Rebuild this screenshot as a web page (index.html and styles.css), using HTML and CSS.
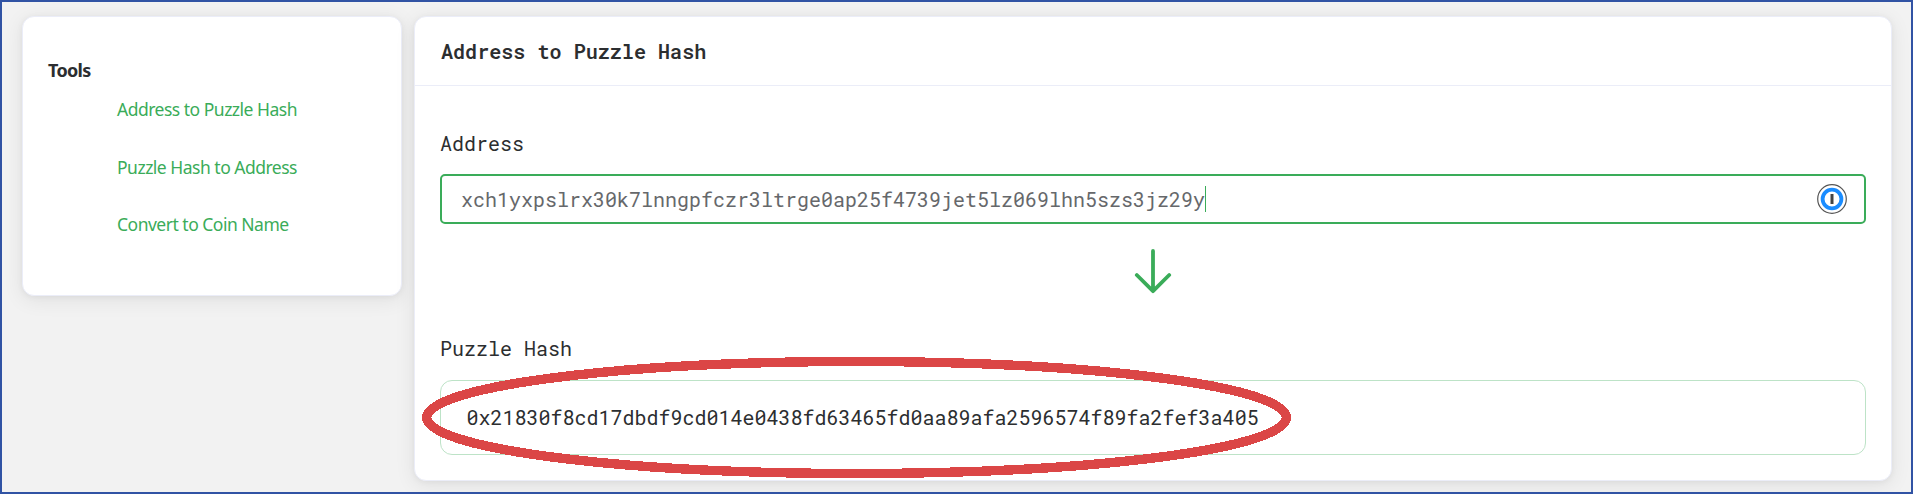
FILE: index.html
```
<!DOCTYPE html>
<html lang="en">
<head>
<meta charset="utf-8">
<title>Address to Puzzle Hash</title>
<link rel="stylesheet" href="styles.css">
</head>
<body>
<div class="page">
  <nav class="card sidebar">
    <h2 class="sidebar-title">Tools</h2>
    <a class="link link-a">Address to Puzzle Hash</a>
    <a class="link link-b">Puzzle Hash to Address</a>
    <a class="link link-c">Convert to Coin Name</a>
  </nav>
  <main class="card main">
    <header class="card-header">Address to Puzzle Hash</header>
    <section class="card-body">
      <div class="label">Address</div>
      <div class="input"><span class="value">xch1yxpslrx30k7lnngpfczr3ltrge0ap25f4739jet5lz069lhn5szs3jz29y</span><span class="caret"></span>
        <svg class="key" width="30" height="30" viewBox="0 0 30 30">
          <circle cx="15" cy="15" r="14.3" fill="#fff" stroke="#555" stroke-width="1.2"/>
          <circle cx="15" cy="15" r="9.4" fill="#fff" stroke="#1a8cff" stroke-width="3.8"/>
          <rect x="13.5" y="10" width="3" height="10" fill="#444"/>
        </svg>
      </div>
      <svg class="arrow" width="38" height="46" viewBox="0 0 38 46" fill="none" stroke="#3aac59" stroke-width="3.8" stroke-linecap="round" stroke-linejoin="round">
        <path d="M19 3V43M2.8 27L19 43.2L35.2 27"/>
      </svg>
      <div class="label">Puzzle Hash</div>
      <div class="result">0x21830f8cd17dbdf9cd014e0438fd63465fd0aa89afa2596574f89fa2fef3a405</div>
    </section>
  </main>
  <svg class="highlight" width="874" height="124" viewBox="0 0 874 124" shape-rendering="crispEdges">
    <ellipse cx="436.5" cy="62.5" rx="429.8" ry="56" fill="none" stroke="#db4646" stroke-width="9.4"/>
  </svg>
</div>
</body>
</html>
```
FILE: styles.css
```
* { box-sizing: border-box; }
body { margin: 0; }
.page {
  position: relative;
  display: flex;
  align-items: flex-start;
  gap: 12px;
  width: 1913px;
  height: 494px;
  padding: 14px 19px 11px 20px;
  border: 2px solid #3153a4;
  background: #f2f2f2;
  overflow: hidden;
  color: #2c2e30;
  font-family: "Roboto Mono", "DejaVu Sans Mono", monospace;
  font-size: 20px;
}
.card {
  background: #fff;
  border: 1px solid #ebedf8;
  border-radius: 12px;
  box-shadow: 0 4px 20px 1px rgba(0, 0, 0, .07), 0 1px 6px rgba(0, 0, 0, .05);
}
.sidebar {
  display: flex;
  flex-direction: column;
  width: 380px;
  height: 280px;
  padding: 39px 25px;
  font-family: "Segoe UI", "Noto Sans", sans-serif;
  font-size: 17.5px;
  letter-spacing: -0.5px;
}
.sidebar-title { margin: 0; font-size: 18px; line-height: 28px; letter-spacing: -0.7px; }
.link { margin-left: 69px; color: #3aac59; line-height: 28px; white-space: nowrap; }
.link-a { margin-top: 11px; }
.link-b { margin-top: 30px; }
.link-c { margin-top: 29px; }
.main { flex: 1; height: 465px; }
.card-header {
  height: 69px;
  padding: 0 26px;
  border-bottom: 1px solid #ebedf8;
  line-height: 69px;
  font-size: 20.1px;
  font-weight: 600;
}
.card-body { display: flex; flex-direction: column; padding: 42px 25px 0; }
.label { line-height: 30px; }
.input {
  display: flex;
  align-items: center;
  height: 50px;
  margin-top: 16px;
  padding: 0 17px 0 19px;
  border: 2px solid #3aac59;
  border-radius: 5px;
  color: #66686b;
}
.caret { width: 1px; height: 26px; background: #3aac59; }
.key { margin-left: auto; }
.arrow { align-self: center; margin: 24px 0 39px; }
.result {
  height: 75px;
  margin-top: 17px;
  padding: 0 25.5px;
  border: 1px solid #bde3c7;
  border-radius: 12px;
  line-height: 73px;
}
.highlight { position: absolute; left: 418px; top: 353px; }
```
